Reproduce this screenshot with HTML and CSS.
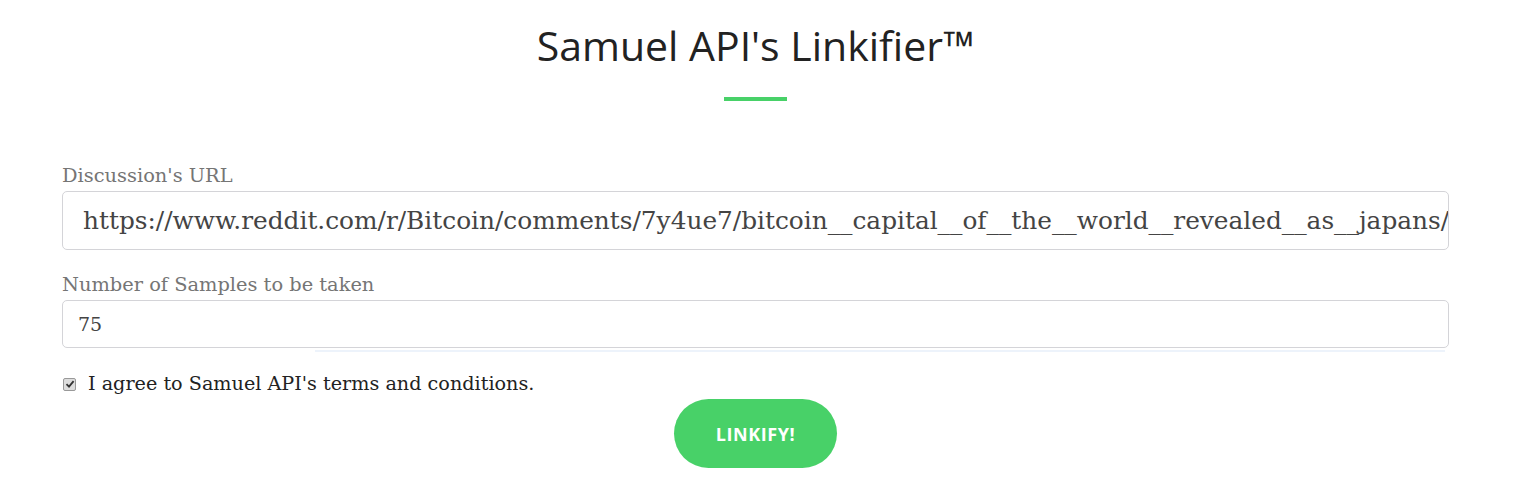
FILE: index.html
```html
<!DOCTYPE html>
<html>
<head>
<meta charset="utf-8">
<link rel="stylesheet" href="styles.css">
</head>
<body>
<div class="page">
  <header class="head">
    <h1 class="title">Samuel API's Linkifier™</h1>
    <div class="rule"></div>
  </header>
  <form class="form">
    <label class="label">Discussion's URL</label>
    <div class="input input-big">https://www.reddit.com/r/Bitcoin/comments/7y4ue7/bitcoin__capital__of__the__world__revealed__as__japans/</div>
    <label class="label label-2">Number of Samples to be taken</label>
    <div class="input input-small">75</div>
    <div class="underline"></div>
    <div class="check-row">
      <span class="checkbox"><svg width="10" height="10" viewBox="0 0 10 10"><path d="M1.5 5.2 L4 7.6 L8.6 2.2" fill="none" stroke="#333" stroke-width="1.8"/></svg></span>
      <span class="check-text">I agree to Samuel API's terms and conditions.</span>
    </div>
    <div class="btn-row"><button type="button" class="btn">LINKIFY!</button></div>
  </form>
</div>
</body>
</html>
```
FILE: styles.css
```css
html, body { margin: 0; padding: 0; background: #fff; }
.page { padding: 0 83px 0 62px; }
.head { display: flex; flex-direction: column; align-items: center; padding-top: 17px; }
.title { margin: 0; font-family: "Open Sans", sans-serif; font-weight: 400; font-size: 41px; line-height: 56px; color: #222; }
.rule { width: 63px; height: 4px; background: #48d168; margin-top: 24px; }
.form { display: flex; flex-direction: column; margin-top: 63px; }
.label { font-family: "DejaVu Serif", serif; font-size: 19.4px; color: #757575; line-height: 24px; }
.label-2 { margin-top: 23px; }
.input { border: 1px solid #d4d4d8; border-radius: 5px; font-family: "DejaVu Serif", serif; color: #444; white-space: nowrap; overflow: hidden; box-sizing: border-box; }
.input-big { height: 59px; margin-top: 3px; font-size: 24.8px; line-height: 57px; padding: 0 20px; }
.input-small { height: 48px; margin-top: 3px; font-size: 19px; line-height: 46px; padding: 0 15px; }
.underline { height: 2px; background: #edf3fb; margin: 2px 4px 0 253px; }
.check-row { display: flex; align-items: center; margin-top: 19px; font-family: "DejaVu Serif", serif; font-size: 19.2px; color: #222; }
.checkbox { width: 11px; height: 11px; border: 1px solid #999; border-radius: 2px; background: #ddd; display: flex; align-items: center; justify-content: center; margin: 0 12px 0 1px; }
.check-text { line-height: 26px; }
.btn-row { display: flex; justify-content: center; margin-top: 2px; }
.btn { width: 163px; height: 69px; border: none; border-radius: 35px; background: #48d168; color: #fff; font-family: "Open Sans", sans-serif; font-weight: 700; font-size: 18px; letter-spacing: 0.6px; }
```
